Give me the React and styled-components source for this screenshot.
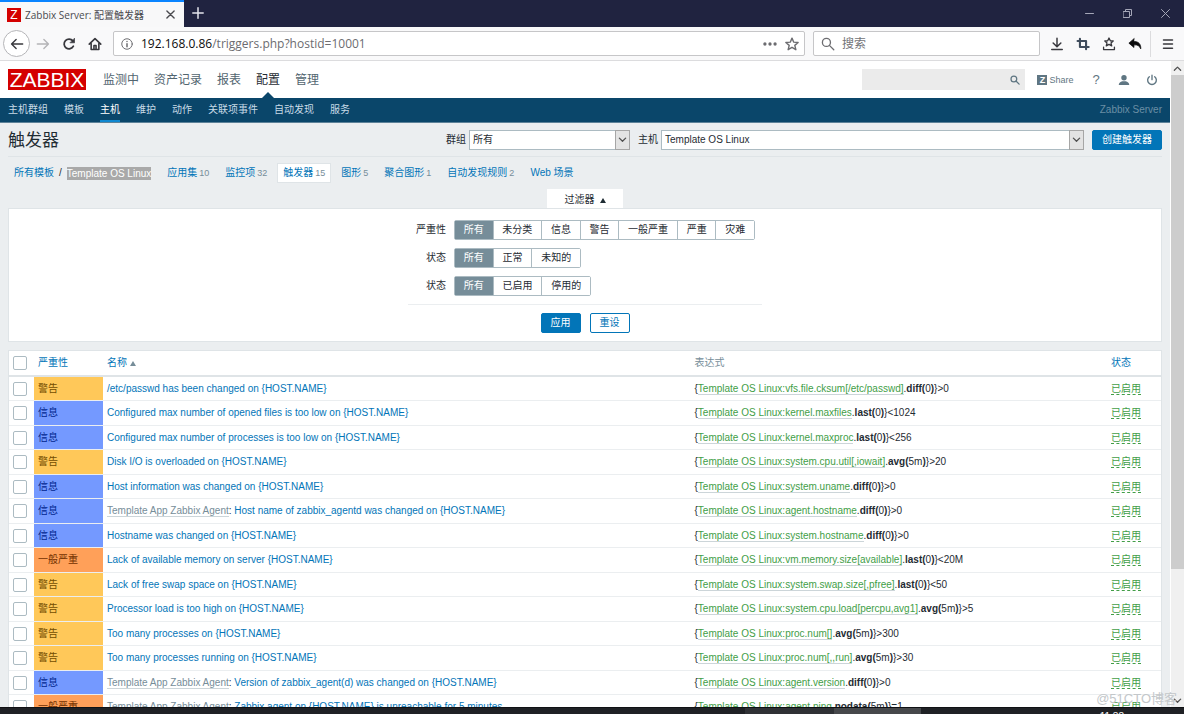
import React, { useState } from 'react';
import styled, { createGlobalStyle } from 'styled-components';

// ==========================================
// THEME VALUES
// ==========================================

const LinkBlue = '#0275b8';
const NavBlue = '#0a466a';
const TextColor = '#1f2c33';
const MutedColor = '#768d99';
const BorderColor = '#dfe4e7';
const ControlBorder = '#acbbc2';
const Green = '#429e47';
const UiFont = '"Open Sans", "Noto Sans CJK SC", sans-serif';
const PageFont = '"Liberation Sans", "Noto Sans CJK SC", sans-serif';

const SEVERITY = {
  warning: { label: '警告', bg: '#ffc859', color: '#734d00' },
  info: { label: '信息', bg: '#7499ff', color: '#00268e' },
  average: { label: '一般严重', bg: '#ffa059', color: '#733100' },
};

const GlobalStyle = createGlobalStyle`
  * { box-sizing: border-box; }
  body {
    margin: 0;
    overflow: hidden;
    font-family: ${PageFont};
    font-size: 10px;
    line-height: 14px;
    color: ${TextColor};
  }
  a { text-decoration: none; }
  button, input, select { font-family: inherit; font-size: inherit; color: inherit; margin: 0; }
  button { cursor: pointer; padding: 0; border: 0; background: none; }
  svg { display: block; flex: none; }
`;

// ==========================================
// BROWSER WINDOW
// ==========================================

const Window = styled.div`
  height: 100vh;
  display: flex;
  flex-direction: column;
  background: #ebeef0;
`;

const TabStrip = styled.div`
  display: flex;
  flex: none;
  height: 27px;
  background: #202340;
  color: #e4e5ec;
  font-family: ${UiFont};
`;

const Tab = styled.div`
  display: flex;
  align-items: center;
  width: 184px;
  padding: 0 8px 0 7px;
  gap: 4px;
  border-top: 2px solid #0a84ff;
  background: #f8f8f9;
  color: #4a4a4f;
`;

const Favicon = styled.span`
  width: 14px;
  height: 14px;
  background: #d40000;
  color: #fff;
  font: 12px/14px "Liberation Sans", sans-serif;
  text-align: center;
`;

const TabTitle = styled.span`
  flex: 1;
  white-space: nowrap;
`;

const IconButton = styled.button`
  display: flex;
  align-items: center;
  justify-content: center;
  width: ${props => props.$width || 26}px;
  height: 26px;
  color: ${props => props.$color || 'inherit'};
`;

const WindowButtons = styled.div`
  display: flex;
  margin-left: auto;
  color: #a5a7b8;
`;

const Toolbar = styled.div`
  display: flex;
  align-items: center;
  flex: none;
  height: 34px;
  padding-left: 3px;
  border-bottom: 1px solid #dcdcde;
  background: #f9f9fa;
  color: #38383d;
  font-family: ${UiFont};
`;

const BackButton = styled(IconButton)`
  width: 27px;
  height: 27px;
  border: 1px solid #b5b5b8;
  border-radius: 50%;
  background: #fff;
`;

const AddressBox = styled.div`
  display: flex;
  align-items: center;
  flex: ${props => (props.$width ? 'none' : 1)};
  width: ${props => (props.$width ? props.$width + 'px' : 'auto')};
  height: 25px;
  margin-left: ${props => props.$gap}px;
  padding: 0 5px 0 7px;
  gap: ${props => (props.$width ? 5 : 8)}px;
  border: 1px solid #c6c6c8;
  border-radius: 2px;
  background: #fff;
  color: #6c6c70;
`;

const AddressText = styled.span`
  flex: 1;
  font-size: 12px;
  line-height: 16px;
  b { font-weight: 400; color: #0c0c0d; }
`;

const BrowserSearch = styled.input`
  flex: 1;
  min-width: 0;
  border: 0;
  outline: 0;
  font-size: 12px;
  background: none;
  &::placeholder { color: #737377; opacity: 1; }
`;

const ToolbarEnd = styled.div`
  display: flex;
  margin-left: 4px;
`;

const MenuButton = styled(IconButton)`
  margin-left: 2px;
  border-left: 1px solid #dcdcde;
`;

const Viewport = styled.div`
  display: flex;
  flex: 1;
  min-height: 0;
  overflow: hidden;
`;

const Page = styled.div`
  flex: 1;
  min-width: 0;
`;

const Scrollbar = styled.div`
  display: flex;
  flex-direction: column;
  flex: none;
  width: 14px;
  border-left: 1px solid #fff;
  background: #f0f0f0;
  color: #505050;
`;

const ScrollArrow = styled(IconButton)`
  width: 100%;
  height: 14px;
`;

const Thumb = styled.div`
  flex: 80;
  background: #cdcdcd;
`;

const Track = styled.div`
  flex: 20;
`;

const Taskbar = styled.div`
  display: flex;
  flex: none;
  height: 7px;
  overflow: hidden;
  border-top: 1px solid #101114;
  background: #1f2125;
  color: #fff;
`;

const TaskItem = styled.div`
  width: ${props => props.$width}px;
  background: ${props => props.$bg};
`;

const Clock = styled.time`
  margin-left: auto;
  padding: 2px 60px 0 0;
`;

const Watermark = styled.div`
  position: absolute;
  right: 7px;
  bottom: 5px;
  font-size: 13px;
  line-height: 20px;
  color: #c3c7ca;
`;

// ==========================================
// ZABBIX HEADER
// ==========================================

const TopBar = styled.header`
  display: flex;
  align-items: center;
  height: 37px;
  padding: 0 8px;
  background: #fff;
`;

const Logo = styled.a`
  width: 78px;
  height: 21px;
  background: #d40000;
  color: #fff;
  font-size: 21px;
  line-height: 22px;
  text-align: center;
`;

const MainNav = styled.nav`
  display: flex;
  align-self: stretch;
  gap: 15px;
  margin-left: 17px;
  font-size: 12px;
`;

const MainLink = styled.a`
  position: relative;
  padding-top: 2px;
  line-height: 35px;
  color: ${props => (props.$active ? TextColor : '#52656f')};
  &::after {
    content: '';
    display: ${props => (props.$active ? 'block' : 'none')};
    position: absolute;
    left: 50%;
    bottom: 0;
    margin-left: -6px;
    border: 6px solid transparent;
    border-top: 0;
    border-bottom-color: ${NavBlue};
  }
`;

const SearchBox = styled.div`
  display: flex;
  align-items: center;
  width: 163px;
  height: 21px;
  margin-left: auto;
  padding-right: 5px;
  background: #ebebeb;
  color: #5f7682;
`;

const SearchInput = styled.input`
  flex: 1;
  min-width: 0;
  border: 0;
  outline: 0;
  background: none;
`;

const HeaderLink = styled.a`
  display: flex;
  align-items: center;
  justify-content: center;
  gap: 2px;
  width: ${props => props.$width || 12}px;
  font-size: ${props => props.$size || 9}px;
  color: #5f7682;
`;

const UserLinks = styled.div`
  display: flex;
  align-items: center;
  gap: 16px;
  padding: 0 4px 0 12px;
`;

const ShareBadge = styled.span`
  width: 10px;
  height: 10px;
  background: #5f7682;
  color: #fff;
  font-size: 9px;
  font-weight: 700;
  line-height: 10px;
  text-align: center;
`;

const SubBar = styled.div`
  display: flex;
  justify-content: space-between;
  height: 25px;
  padding: 0 8px;
  background: ${NavBlue};
  border-bottom: 1px solid #5d8299;
`;

const SubNav = styled.nav`
  display: flex;
  gap: 16px;
`;

const SubLink = styled.a`
  padding-top: 1px;
  line-height: 21px;
  color: ${props => (props.$active ? '#fff' : '#c8dbe7')};
  border-bottom: 2px solid ${props => (props.$active ? '#0f87d0' : 'transparent')};
`;

const ServerName = styled.span`
  line-height: 24px;
  color: #6a8fa5;
`;

// ==========================================
// PAGE TITLE AND TABS
// ==========================================

const Content = styled.main`
  padding: 0 8px;
`;

const TitleRow = styled.div`
  display: flex;
  align-items: center;
  height: 34px;
  border-bottom: 1px solid ${BorderColor};
`;

const Title = styled.h1`
  margin: 0 auto 0 0;
  padding-top: 3px;
  font-size: 17px;
  font-weight: 400;
  line-height: 24px;
`;

const Picker = styled.label`
  display: flex;
  align-items: center;
  gap: 3px;
  margin-right: 8px;
`;

const SelectWrap = styled.span`
  position: relative;
  width: ${props => props.$width}px;
`;

const Select = styled.select`
  display: block;
  width: 100%;
  height: 20px;
  padding: 0 16px 0 3px;
  border: 1px solid ${ControlBorder};
  border-radius: 0;
  appearance: none;
  background: #fff;
`;

const SelectArrow = styled.span`
  position: absolute;
  top: 0;
  right: 0;
  display: flex;
  align-items: center;
  justify-content: center;
  width: 15px;
  height: 20px;
  border: 1px solid #a6a6a6;
  background: #e3e3e3;
  color: #505050;
  pointer-events: none;
`;

const Button = styled.button`
  height: 20px;
  padding: 0 9px;
  border: 1px solid ${LinkBlue};
  border-radius: 2px;
  line-height: 18px;
  background: ${props => (props.$outline ? '#fff' : LinkBlue)};
  color: ${props => (props.$outline ? LinkBlue : '#fff')};
`;

const TabRow = styled.nav`
  display: flex;
  align-items: center;
  gap: 6px;
  height: 32px;
  padding-left: 6px;
  color: ${MutedColor};
`;

const Crumbs = styled.span`
  display: flex;
  align-items: center;
  gap: 5px;
  margin-right: 5px;
  color: ${TextColor};
`;

const TextLink = styled.a`
  color: ${LinkBlue};
`;

const SelectedLink = styled.a`
  background: #a9a9a9;
  color: #fff;
  line-height: 13px;
`;

const PageTab = styled.a`
  display: flex;
  align-items: center;
  gap: 2px;
  height: 18px;
  padding: 0 5px;
  color: ${LinkBlue};
  background: ${props => (props.$active ? '#fff' : 'transparent')};
  box-shadow: ${props => (props.$active ? `0 0 0 1px ${BorderColor}` : 'none')};
  small { font-size: 9px; color: ${MutedColor}; }
`;

// ==========================================
// FILTER
// ==========================================

const FilterTab = styled.button`
  display: flex;
  align-items: center;
  justify-content: center;
  gap: 5px;
  width: 76px;
  height: 19px;
  margin: 0 auto;
  background: #fff;
`;

const FilterPanel = styled.form`
  display: flex;
  flex-direction: column;
  align-items: center;
  height: 134px;
  padding-top: 11px;
  border: 1px solid ${BorderColor};
  background: #fff;
`;

const FilterRows = styled.div`
  display: flex;
  flex-direction: column;
  gap: 8px;
  width: 354px;
  padding-bottom: 8px;
  border-bottom: 1px solid #ebeef0;
`;

const FilterRow = styled.div`
  display: flex;
  align-items: center;
  gap: 8px;
`;

const FilterLabel = styled.span`
  width: 38px;
  text-align: right;
`;

const Segments = styled.div`
  display: flex;
  width: ${props => props.$width}px;
  height: 20px;
  border: 1px solid ${ControlBorder};
  border-radius: 2px;
`;

const Segment = styled.button`
  flex: 1 0 auto;
  padding: 0 8px;
  line-height: 18px;
  background: ${props => (props.$active ? MutedColor : '#fff')};
  color: ${props => (props.$active ? '#fff' : TextColor)};
  & + & { border-left: 1px solid ${ControlBorder}; }
`;

const FilterButtons = styled.div`
  display: flex;
  gap: 9px;
  padding-top: 8px;
`;

// ==========================================
// TRIGGER TABLE
// ==========================================

const Table = styled.table`
  width: 100%;
  margin-top: 8px;
  table-layout: fixed;
  border-collapse: separate;
  border-spacing: 0;
  border: 1px solid ${BorderColor};
  background: #fff;
  white-space: nowrap;
`;

const HeadCell = styled.th`
  width: ${props => props.$width || 'auto'};
  height: 26px;
  padding: 0 4px;
  border-bottom: 2px solid ${BorderColor};
  font-weight: 400;
  text-align: left;
  color: ${MutedColor};
`;

const Row = styled.tr`
  height: 24px;
  &:nth-child(even) { height: 25px; }
`;

const Cell = styled.td`
  padding: 0 4px;
  border-bottom: 1px solid #ebeef0;
`;

const SeverityCell = styled(Cell)`
  background: ${props => SEVERITY[props.$level].bg};
  background-clip: padding-box;
  color: ${props => SEVERITY[props.$level].color};
`;

const CheckBox = styled.input`
  display: block;
  width: 14px;
  height: 14px;
  appearance: none;
  border: 1px solid ${ControlBorder};
  border-radius: 2px;
  background: #fff;
  &:checked { background: ${MutedColor}; }
`;

const TemplateLink = styled.a`
  color: ${MutedColor};
  border-bottom: 1px solid #ccd5d9;
`;

const ItemLink = styled.a`
  color: ${Green};
  border-bottom: 1px solid #ccd5d9;
`;

const StatusLink = styled.a`
  color: ${Green};
  border-bottom: 1px dashed ${Green};
`;

const SortArrow = styled.span`
  display: inline-block;
  margin-left: 3px;
  border: 3px solid transparent;
  border-top: 0;
  border-bottom: 5px solid ${MutedColor};
`;

const FilterArrow = styled(SortArrow)`
  margin: 3px 0 0;
  border-bottom-color: ${TextColor};
`;

// ==========================================
// ICONS
// ==========================================

const Icon = ({ size = 14, box = 16, width = 1.6, children }) => (
  <svg
    width={size}
    height={size}
    viewBox={`0 0 ${box} ${box}`}
    fill="none"
    stroke="currentColor"
    strokeWidth={width}
    strokeLinecap="round"
    strokeLinejoin="round"
    aria-hidden="true"
  >
    {children}
  </svg>
);

const Magnifier = ({ size, width }) => (
  <Icon size={size} width={width}>
    <circle cx="6.2" cy="6.2" r="4.6" />
    <path d="M9.6 9.6 L14.6 14.6" />
  </Icon>
);

const Chevron = ({ up }) => (
  <Icon size={9} box={10} width={1.4}>
    <path d={up ? 'M1.5 7 L5 3.5 L8.5 7' : 'M1.5 3.5 L5 7 L8.5 3.5'} />
  </Icon>
);

// ==========================================
// DATA
// ==========================================

const mainMenu = ['监测中', '资产记录', '报表', '配置', '管理'];
const subMenu = ['主机群组', '模板', '主机', '维护', '动作', '关联项事件', '自动发现', '服务'];

const pageTabs = [
  ['应用集', 10],
  ['监控项', 32],
  ['触发器', 15],
  ['图形', 5],
  ['聚合图形', 1],
  ['自动发现规则', 2],
  ['Web 场景'],
];

const filters = [
  { id: 'severity', label: '严重性', width: 301, options: ['所有', '未分类', '信息', '警告', '一般严重', '严重', '灾难'] },
  { id: 'state', label: '状态', width: 127, options: ['所有', '正常', '未知的'] },
  { id: 'status', label: '状态', width: 137, options: ['所有', '已启用', '停用的'] },
];

const agent = 'Template App Zabbix Agent';

const triggers = [
  { level: 'warning', name: '/etc/passwd has been changed on {HOST.NAME}', item: 'vfs.file.cksum[/etc/passwd]', fn: 'diff', arg: '0', cmp: '>0' },
  { level: 'info', name: 'Configured max number of opened files is too low on {HOST.NAME}', item: 'kernel.maxfiles', fn: 'last', arg: '0', cmp: '<1024' },
  { level: 'info', name: 'Configured max number of processes is too low on {HOST.NAME}', item: 'kernel.maxproc', fn: 'last', arg: '0', cmp: '<256' },
  { level: 'warning', name: 'Disk I/O is overloaded on {HOST.NAME}', item: 'system.cpu.util[,iowait]', fn: 'avg', arg: '5m', cmp: '>20' },
  { level: 'info', name: 'Host information was changed on {HOST.NAME}', item: 'system.uname', fn: 'diff', arg: '0', cmp: '>0' },
  { level: 'info', template: agent, name: 'Host name of zabbix_agentd was changed on {HOST.NAME}', item: 'agent.hostname', fn: 'diff', arg: '0', cmp: '>0' },
  { level: 'info', name: 'Hostname was changed on {HOST.NAME}', item: 'system.hostname', fn: 'diff', arg: '0', cmp: '>0' },
  { level: 'average', name: 'Lack of available memory on server {HOST.NAME}', item: 'vm.memory.size[available]', fn: 'last', arg: '0', cmp: '<20M' },
  { level: 'warning', name: 'Lack of free swap space on {HOST.NAME}', item: 'system.swap.size[,pfree]', fn: 'last', arg: '0', cmp: '<50' },
  { level: 'warning', name: 'Processor load is too high on {HOST.NAME}', item: 'system.cpu.load[percpu,avg1]', fn: 'avg', arg: '5m', cmp: '>5' },
  { level: 'warning', name: 'Too many processes on {HOST.NAME}', item: 'proc.num[]', fn: 'avg', arg: '5m', cmp: '>300' },
  { level: 'warning', name: 'Too many processes running on {HOST.NAME}', item: 'proc.num[,,run]', fn: 'avg', arg: '5m', cmp: '>30' },
  { level: 'info', template: agent, name: 'Version of zabbix_agent(d) was changed on {HOST.NAME}', item: 'agent.version', fn: 'diff', arg: '0', cmp: '>0' },
  { level: 'average', template: agent, name: 'Zabbix agent on {HOST.NAME} is unreachable for 5 minutes', item: 'agent.ping', fn: 'nodata', arg: '5m', cmp: '=1' },
];

// ==========================================
// SECTIONS
// ==========================================

function BrowserChrome() {
  return (
    <>
      <TabStrip>
        <Tab>
          <Favicon>Z</Favicon>
          <TabTitle>Zabbix Server: 配置触发器</TabTitle>
          <IconButton $width={12} aria-label="Close tab">
            <Icon size={9} box={10} width={1.5}><path d="M1 1 L9 9 M9 1 L1 9" /></Icon>
          </IconButton>
        </Tab>
        <IconButton $width={28} aria-label="New tab">
          <Icon size={12} box={12} width={1.5}><path d="M6 0.8 V11.2 M0.8 6 H11.2" /></Icon>
        </IconButton>
        <WindowButtons>
          <IconButton $width={38} aria-label="Minimize">
            <Icon size={9} box={9} width={1}><path d="M0.5 4.5 H8.5" /></Icon>
          </IconButton>
          <IconButton $width={38} aria-label="Restore">
            <Icon size={9} box={9} width={1}><path d="M0.5 2.5 H6.5 V8.5 H0.5 Z M2.5 2.5 V0.5 H8.5 V6.5 H6.5" /></Icon>
          </IconButton>
          <IconButton $width={38} aria-label="Close">
            <Icon size={9} box={9} width={1}><path d="M0.5 0.5 L8.5 8.5 M8.5 0.5 L0.5 8.5" /></Icon>
          </IconButton>
        </WindowButtons>
      </TabStrip>

      <Toolbar>
        <BackButton aria-label="Back">
          <Icon><path d="M14.5 8 H2 M7 2.8 L1.8 8 L7 13.2" /></Icon>
        </BackButton>
        <IconButton aria-label="Forward" $color="#b4b4b7">
          <Icon><path d="M1.5 8 H14 M9 2.8 L14.2 8 L9 13.2" /></Icon>
        </IconButton>
        <IconButton aria-label="Reload">
          <Icon width={2}>
            <path d="M13 10.5 A5.6 5.6 0 1 1 12.4 4.4" />
            <path d="M14.3 1.8 V6.6 H9.5 Z" fill="currentColor" strokeWidth="0.8" />
          </Icon>
        </IconButton>
        <IconButton aria-label="Home">
          <Icon width={1.8}>
            <path d="M1.4 8.2 L8 1.8 L14.6 8.2 M3.6 7.4 V14.2 H12.4 V7.4" />
            <path d="M6.8 14 V9.8 H9.2 V14" />
          </Icon>
        </IconButton>

        <AddressBox $gap={5}>
          <Icon size={12} width={1.3}>
            <circle cx="8" cy="8" r="7" />
            <path d="M8 7.5 V11.5 M8 4.6 V4.8" strokeWidth="2" />
          </Icon>
          <AddressText><b>192.168.0.86</b>/triggers.php?hostid=10001</AddressText>
          <Icon width={0}>
            <g fill="currentColor">
              <circle cx="2.2" cy="8" r="1.9" />
              <circle cx="8" cy="8" r="1.9" />
              <circle cx="13.8" cy="8" r="1.9" />
            </g>
          </Icon>
          <Icon width={1.6}>
            <path d="M8 1.3 L10 5.9 L15 6.3 L11.2 9.6 L12.4 14.5 L8 11.8 L3.6 14.5 L4.8 9.6 L1 6.3 L6 5.9 Z" />
          </Icon>
        </AddressBox>
        <AddressBox $gap={8} $width={227}>
          <Magnifier size={14} width={1.5} />
          <BrowserSearch placeholder="搜索" aria-label="搜索" />
        </AddressBox>

        <ToolbarEnd>
          <IconButton aria-label="Downloads">
            <Icon width={1.7}><path d="M8 1.5 V11 M3.6 6.8 L8 11.2 L12.4 6.8 M2 14.4 H14" /></Icon>
          </IconButton>
          <IconButton aria-label="Screenshot" $color="#3f4c5c">
            <Icon width={2.4}><path d="M4.5 2 V11.5 H14.5 M1.8 4.5 H11.5 V14" /></Icon>
          </IconButton>
          <IconButton aria-label="Bookmarks">
            <Icon width={1.5}>
              <path d="M8 1.2 L9.5 4.3 L12.8 4.6 L10.3 6.8 L11.1 10.2 L8 8.4 L4.9 10.2 L5.7 6.8 L3.2 4.6 L6.5 4.3 Z" />
              <path d="M1.8 11.6 V14.4 H14.2 V11.6" />
            </Icon>
          </IconButton>
          <IconButton aria-label="Undo" $color="#0c0c0d">
            <Icon width={0.8}>
              <path d="M6.8 2 L1 7 L6.8 12 V9 C11 8.8 13 10 14.6 13.6 C15 8 12 5 6.8 5 Z" fill="currentColor" />
            </Icon>
          </IconButton>
          <MenuButton $width={34} aria-label="Menu">
            <Icon size={12} width={2}><path d="M2 2.5 H14 M2 8 H14 M2 13.5 H14" /></Icon>
          </MenuButton>
        </ToolbarEnd>
      </Toolbar>
    </>
  );
}

function ZabbixHeader() {
  return (
    <>
      <TopBar>
        <Logo href="#">ZABBIX</Logo>
        <MainNav>
          {mainMenu.map((item) => (
            <MainLink key={item} href="#" $active={item === '配置'}>{item}</MainLink>
          ))}
        </MainNav>
        <SearchBox>
          <SearchInput aria-label="Search" />
          <Magnifier size={10} width={2} />
        </SearchBox>
        <UserLinks>
          <HeaderLink href="#" $width={37}><ShareBadge>Z</ShareBadge>Share</HeaderLink>
          <HeaderLink href="#" $size={13}>?</HeaderLink>
          <HeaderLink href="#" aria-label="Profile">
            <Icon size={12} width={0}>
              <g fill="currentColor">
                <circle cx="8" cy="5" r="3.6" />
                <path d="M1 14.5 C1 11.5 3.5 10.2 5.6 9.6 H10.4 C12.5 10.2 15 11.5 15 14.5 Z" />
              </g>
            </Icon>
          </HeaderLink>
          <HeaderLink href="#" aria-label="Sign out">
            <Icon size={12} width={1.8}><path d="M8 1.6 V7.5 M4.4 3.6 A5.8 5.8 0 1 0 11.6 3.6" /></Icon>
          </HeaderLink>
        </UserLinks>
      </TopBar>
      <SubBar>
        <SubNav>
          {subMenu.map((item) => (
            <SubLink key={item} href="#" $active={item === '主机'}>{item}</SubLink>
          ))}
        </SubNav>
        <ServerName>Zabbix Server</ServerName>
      </SubBar>
    </>
  );
}

function Filter() {
  const [selected, setSelected] = useState({ severity: '所有', state: '所有', status: '所有' });

  return (
    <>
      <FilterTab type="button">过滤器<FilterArrow /></FilterTab>
      <FilterPanel onSubmit={(e) => e.preventDefault()}>
        <FilterRows>
          {filters.map(({ id, label, width, options }) => (
            <FilterRow key={id}>
              <FilterLabel id={`label-${id}`}>{label}</FilterLabel>
              <Segments $width={width} role="group" aria-labelledby={`label-${id}`}>
                {options.map((option) => (
                  <Segment
                    key={option}
                    type="button"
                    $active={selected[id] === option}
                    onClick={() => setSelected({ ...selected, [id]: option })}
                  >
                    {option}
                  </Segment>
                ))}
              </Segments>
            </FilterRow>
          ))}
        </FilterRows>
        <FilterButtons>
          <Button type="submit">应用</Button>
          <Button type="reset" $outline>重设</Button>
        </FilterButtons>
      </FilterPanel>
    </>
  );
}

function TriggerTable() {
  return (
    <Table>
      <thead>
        <tr>
          <HeadCell $width="25px"><CheckBox type="checkbox" aria-label="Select all" /></HeadCell>
          <HeadCell $width="69px"><TextLink href="#">严重性</TextLink></HeadCell>
          <HeadCell $width="51%"><TextLink href="#">名称<SortArrow /></TextLink></HeadCell>
          <HeadCell>表达式</HeadCell>
          <HeadCell $width="54px"><TextLink href="#">状态</TextLink></HeadCell>
        </tr>
      </thead>
      <tbody>
        {triggers.map((t) => (
          <Row key={t.name}>
            <Cell><CheckBox type="checkbox" aria-label={t.name} /></Cell>
            <SeverityCell $level={t.level}>{SEVERITY[t.level].label}</SeverityCell>
            <Cell>
              {t.template && <><TemplateLink href="#">{t.template}</TemplateLink>: </>}
              <TextLink href="#">{t.name}</TextLink>
            </Cell>
            <Cell>
              {'{'}<ItemLink href="#">Template OS Linux:{t.item}</ItemLink>.<b>{t.fn}(</b>{t.arg}<b>)</b>{'}'}{t.cmp}
            </Cell>
            <Cell><StatusLink href="#">已启用</StatusLink></Cell>
          </Row>
        ))}
      </tbody>
    </Table>
  );
}

// ==========================================
// MAIN COMPONENT
// ==========================================

export default function App() {
  return (
    <Window>
      <GlobalStyle />
      <BrowserChrome />
      <Viewport>
        <Page>
          <ZabbixHeader />
          <Content>
            <TitleRow>
              <Title>触发器</Title>
              <Picker>
                群组
                <SelectWrap $width={161}>
                  <Select><option>所有</option></Select>
                  <SelectArrow><Chevron /></SelectArrow>
                </SelectWrap>
              </Picker>
              <Picker>
                主机
                <SelectWrap $width={423}>
                  <Select><option>Template OS Linux</option></Select>
                  <SelectArrow><Chevron /></SelectArrow>
                </SelectWrap>
              </Picker>
              <Button type="button">创建触发器</Button>
            </TitleRow>
            <TabRow>
              <Crumbs>
                <TextLink href="#">所有模板</TextLink>/
                <SelectedLink href="#">Template OS Linux</SelectedLink>
              </Crumbs>
              {pageTabs.map(([label, count]) => (
                <PageTab key={label} href="#" $active={label === '触发器'}>
                  {label}{count && <small>{count}</small>}
                </PageTab>
              ))}
            </TabRow>
            <Filter />
            <TriggerTable />
          </Content>
        </Page>
        <Scrollbar>
          <ScrollArrow aria-label="Scroll up"><Chevron up /></ScrollArrow>
          <Thumb />
          <Track />
          <ScrollArrow aria-label="Scroll down"><Chevron /></ScrollArrow>
        </Scrollbar>
      </Viewport>
      <Taskbar>
        <TaskItem $width={745} $bg="#1f2125" />
        <TaskItem $width={89} $bg="#2f3135" />
        <TaskItem $width={87} $bg="#46484b" />
        <Clock>11:38</Clock>
      </Taskbar>
      <Watermark>@51CTO博客</Watermark>
    </Window>
  );
}
